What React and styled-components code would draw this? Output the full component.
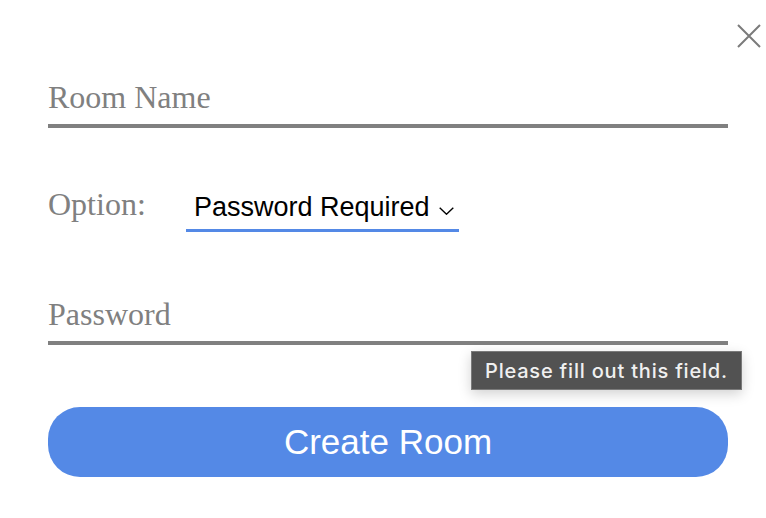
import React from 'react'
import styled, { createGlobalStyle } from 'styled-components'

const theme = {
  gray: '#808080',
  blue: '#5489e6',
  serif: '"Liberation Serif", "Times New Roman", serif',
  sans: '"Liberation Sans", Arial, sans-serif',
}

const GlobalStyle = createGlobalStyle`
  html, body {
    margin:0;
    padding:0;
    background:#fff;
  }
  * { box-sizing:border-box; }
`

const Modal = styled.div`
  width:766px;
  min-height:518px;
  padding:24px 5px 0 48px;
  background:#fff;
`

const CloseRow = styled.div`
  display:flex;
  justify-content:flex-end;
  height:24px;
`

const CloseButton = styled.button`
  width:24px;
  height:24px;
  padding:0;
  border:none;
  background:none;
  cursor:pointer;
  color:#7b7b7b;
`

const Form = styled.form`
  display:flex;
  flex-direction:column;
  margin-right:33px;
  padding-top:30px;
`

const Field = styled.div`
  position:relative;
  margin-top:${props => props.gap || 0}px;
`

const TextInput = styled.input`
  display:block;
  width:100%;
  margin:0;
  padding:1px 0 9px 0;
  border:none;
  border-bottom:4px solid ${theme.gray};
  border-radius:0;
  outline:none;
  font-family:${theme.serif};
  font-size:32px;
  line-height:36px;
  height:50px;
  color:#333;
  background:transparent;
  &::placeholder {
    color:${theme.gray};
    opacity:1;
  }
`

const OptionRow = styled.div`
  display:flex;
  align-items:flex-start;
  margin-top:56px;
`

const Label = styled.label`
  width:138px;
  margin-top:2px;
  font-family:${theme.serif};
  font-size:32px;
  line-height:36px;
  color:${theme.gray};
`

const SelectBox = styled.div`
  display:flex;
  align-items:center;
  flex:0 0 273px;
  width:273px;
  margin-top:8px;
  padding:0 0 7px 8px;
  border-bottom:3px solid ${theme.blue};
  font-family:${theme.sans};
  font-size:27px;
  line-height:30px;
  color:#000;
  white-space:nowrap;
  cursor:pointer;
`

const Chevron = styled.svg`
  margin-left:9px;
  margin-top:8px;
  flex:0 0 auto;
`

const Tooltip = styled.div`
  position:absolute;
  top:calc(100% + 6px);
  left:423px;
  width:271px;
  height:39px;
  padding:0 0 0 13px;
  display:flex;
  align-items:center;
  background:#525252;
  border:1px solid #7a7a7a;
  color:#f0f0f0;
  font-family:Inter, "Liberation Sans", sans-serif;
  font-size:20px;
  font-weight:500;
  letter-spacing:0.8px;
  white-space:nowrap;
  box-shadow:0 4px 12px rgba(0,0,0,0.18);
`

const SubmitButton = styled.button`
  margin-top:62px;
  height:70px;
  width:100%;
  border:none;
  border-radius:32px;
  background:${theme.blue};
  color:#fff;
  font-family:${theme.sans};
  font-size:35px;
  line-height:70px;
  padding:0;
  cursor:pointer;
`

const App = () => {
  return (
    <>
      <GlobalStyle />
      <Modal>
        <CloseRow>
          <CloseButton type="button" aria-label="close">
            <svg width="24" height="24" viewBox="0 0 24 24">
              <path d="M1 1 L23 23 M23 1 L1 23" stroke="currentColor" strokeWidth="2" fill="none" />
            </svg>
          </CloseButton>
        </CloseRow>
        <Form onSubmit={e => e.preventDefault()}>
          <Field>
            <TextInput placeholder="Room Name" />
          </Field>
          <OptionRow>
            <Label>Option:</Label>
            <SelectBox>
              Password Required
              <Chevron width="15" height="8" viewBox="0 0 15 8">
                <path d="M0.7 0.7 L7.5 7.2 L14.3 0.7" stroke="#000" strokeWidth="1.4" fill="none" />
              </Chevron>
            </SelectBox>
          </OptionRow>
          <Field gap={63}>
            <TextInput type="password" placeholder="Password" />
            <Tooltip>Please fill out this field.</Tooltip>
          </Field>
          <SubmitButton type="submit">Create Room</SubmitButton>
        </Form>
      </Modal>
    </>
  )
}

export default App
